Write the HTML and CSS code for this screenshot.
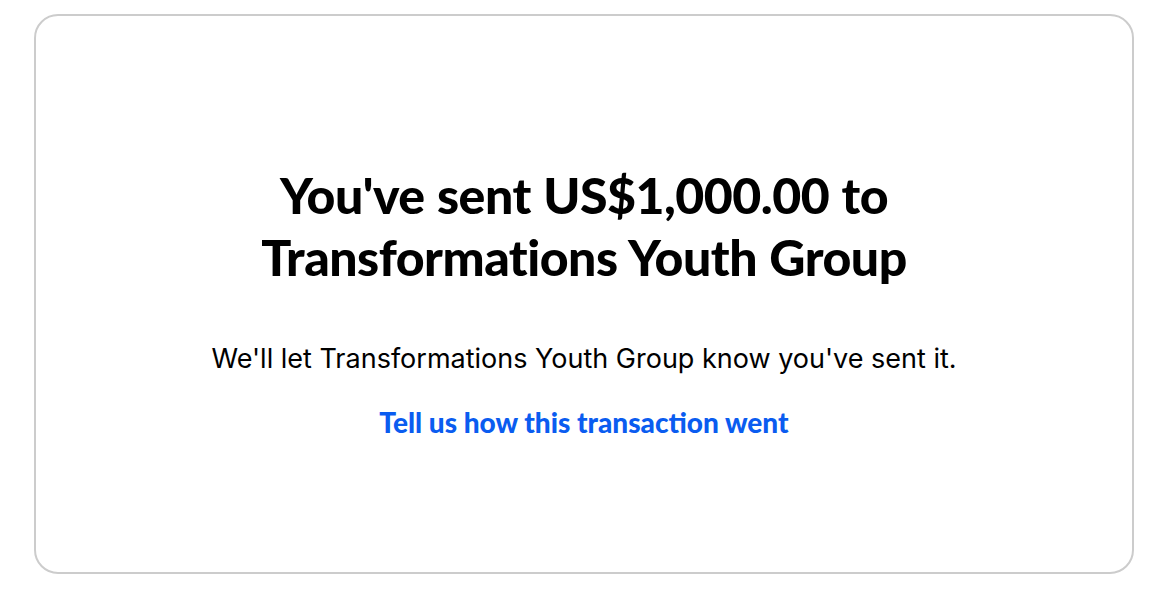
FILE: index.html
```html
<!DOCTYPE html>
<html lang="en">
<head>
<meta charset="utf-8">
<title>Sent</title>
<link rel="stylesheet" href="styles.css">
</head>
<body>
<main class="card">
  <h1 class="title">You've sent US$1,000.00 to<br>Transformations Youth Group</h1>
  <p class="note">We'll let Transformations Youth Group know you've sent it.</p>
  <a class="feedback" href="#">Tell us how this transaction went</a>
</main>
</body>
</html>
```

FILE: styles.css
```css
html, body {
  margin: 0;
  padding: 0;
  background: #ffffff;
}
body {
  padding: 14px 30px 40px 34px;
}
.card {
  box-sizing: border-box;
  width: 1100px;
  height: 560px;
  border: 2px solid #cccccc;
  border-radius: 24px;
  display: flex;
  flex-direction: column;
  align-items: center;
  padding-top: 148px;
  text-align: center;
}
.title {
  margin: 0;
  font-family: Lato, "Liberation Sans", sans-serif;
  font-weight: 900;
  font-size: 50px;
  line-height: 62px;
  letter-spacing: -0.5px;
  word-spacing: 1px;
  color: #000000;
}
.note {
  margin: 55px 0 0;
  font-family: Inter, "Liberation Sans", Arial, sans-serif;
  font-size: 27px;
  line-height: 32px;
  color: #000000;
}
.feedback {
  margin-top: 31px;
  font-family: Lato, "Liberation Sans", sans-serif;
  font-weight: 900;
  font-size: 28px;
  line-height: 32px;
  color: #0a5cf0;
  text-decoration: none;
}
```
